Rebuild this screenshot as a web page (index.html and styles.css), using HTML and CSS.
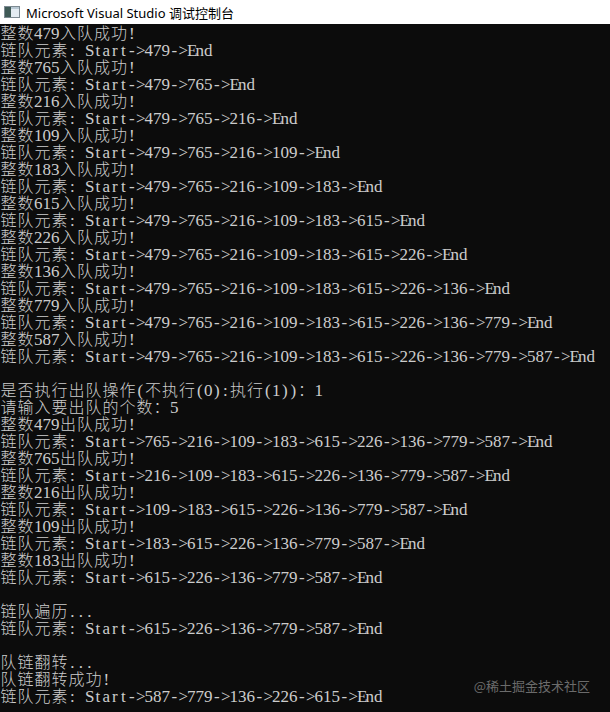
FILE: index.html
```html
<!DOCTYPE html>
<html lang="zh-CN">
<head>
    <meta charset="UTF-8">
    <meta name="viewport" content="width=device-width, initial-scale=1.0">
    <title>Microsoft Visual Studio 调试控制台</title>
    <link rel="stylesheet" href="styles.css">
</head>
<body>
    <div class="window">
        <div class="titlebar">
            <svg class="app-icon" width="16" height="12" viewBox="0 0 16 12">
                <rect x="0.5" y="0.5" width="15" height="11" fill="#e4ecf2" stroke="#7d8a92"/>
                <rect x="1" y="1" width="6" height="10" fill="#3f5a56"/>
                <rect x="7" y="1" width="8" height="2" fill="#b9c9d4"/>
            </svg>
            <span class="title">Microsoft Visual Studio 调试控制台</span>
        </div>

        <div class="console" id="console"></div>

        <div class="watermark">@稀土掘金技术社区</div>
    </div>

    <script>
        // replay the program output of the linked queue demo
        const values = [479, 765, 216, 109, 183, 615, 226, 136, 779, 587];
        const out = [];
        let queue = [];

        function chain() {
            return '链队元素: Start->' + queue.map(v => v + '->').join('') + 'End';
        }

        values.forEach(v => {
            queue.push(v);
            out.push(`整数${v}入队成功!`);
            out.push(chain());
        });

        out.push('');
        out.push('是否执行出队操作(不执行(0):执行(1))：1');
        out.push('请输入要出队的个数：5');

        for (let i = 0; i < 5; i++) {
            const v = queue.shift();
            out.push(`整数${v}出队成功!`);
            out.push(chain());
        }

        out.push('');
        out.push('链队遍历...');
        out.push(chain());
        out.push('');
        out.push('队链翻转...');
        out.push('队链翻转成功!');
        queue.reverse();
        out.push(chain());

        // draw on a fixed cell grid like the console does
        const wide = /[\u3000-\u9fff\uff00-\uffef]/;
        const consoleEl = document.getElementById('console');

        out.forEach(text => {
            const line = document.createElement('div');
            line.className = 'ln';
            for (const ch of text) {
                const cell = document.createElement('span');
                cell.className = wide.test(ch) ? 'cell w' : 'cell';
                cell.textContent = ch;
                line.appendChild(cell);
            }
            consoleEl.appendChild(line);
        });
    </script>
</body>
</html>
```

FILE: styles.css
```css
* {
    margin: 0;
    padding: 0;
    box-sizing: border-box;
}

body {
    background: #0c0c0c;
}

.window {
    position: relative;
    width: 610px;
    height: 712px;
    overflow: hidden;
}

.titlebar {
    display: flex;
    align-items: center;
    gap: 6px;
    height: 24px;
    padding-left: 4px;
    background: #ffffff;
}

.app-icon {
    flex-shrink: 0;
}

.title {
    font-family: "Noto Sans", "Noto Sans CJK SC", sans-serif;
    font-size: 13px;
    color: #000;
}

.console {
    color: #cccccc;
}

.ln {
    display: flex;
    align-items: baseline;
    height: 17px;
}

.cell {
    flex: none;
    width: 8.5px;
    line-height: 17px;
    text-align: center;
    white-space: pre;
    font-family: "Liberation Serif", serif;
    font-size: 17px;
}

.cell.w {
    width: 17px;
    font-family: "Noto Sans CJK SC", sans-serif;
    font-size: 16px;
    font-weight: 300;
}

.watermark {
    position: absolute;
    right: 20px;
    bottom: 17px;
    font-family: "Noto Sans CJK SC", sans-serif;
    font-size: 13px;
    color: #6b6b6b;
}
```
